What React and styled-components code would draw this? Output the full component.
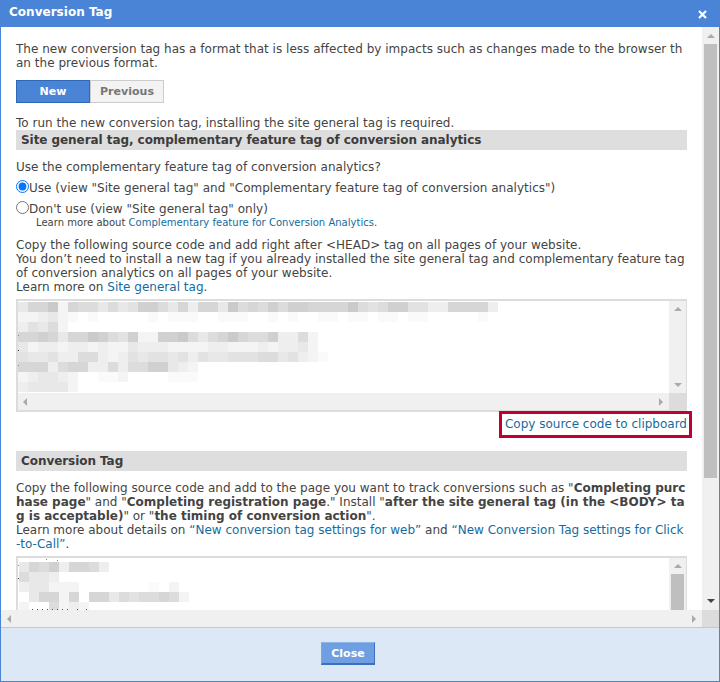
import React from "react";
import styled, { createGlobalStyle } from "styled-components";

const GlobalStyle = createGlobalStyle`
  html, body {
    margin: 0;
    padding: 0;
    background: #fff;
  }
  body {
    font-family: "DejaVu Sans", Verdana, sans-serif;
    font-size: 12px;
    letter-spacing: 0.02px;
    color: #444;
  }
`;

const Dialog = styled.div`
  width: 720px;
  height: 682px;
  box-sizing: border-box;
  display: flex;
  flex-direction: column;
  border: 1px solid #4a84d6;
  border-top: 0;
  overflow: hidden;
`;

const TitleBar = styled.div`
  height: 27px;
  flex: none;
  box-sizing: border-box;
  margin: 0 -1px;
  padding: 0 13px 3px 9px;
  background: #4a84d6;
  display: flex;
  align-items: center;
  justify-content: space-between;
  color: #fff;
  font-size: 12px;
  font-weight: bold;
`;

const CloseX = styled.svg`
  width: 9px;
  height: 9px;
  margin-top: 4px;
`;

const Middle = styled.div`
  height: 583px;
  flex: none;
  display: flex;
`;

const Viewport = styled.div`
  flex: 1;
  min-width: 0;
  overflow: hidden;
  padding: 15px 15px 0 15px;
`;

const VRail = styled.div`
  flex: none;
  width: ${(p) => p.$width}px;
  background: #f0f0f0;
  display: flex;
  flex-direction: column;
  align-items: center;
  padding: ${(p) => p.$pad}px 0;
  box-sizing: border-box;
`;

const VThumb = styled.div`
  width: 13px;
  height: ${(p) => p.$height}px;
  flex: none;
  margin-top: 6px;
  background: #bfbfbf;
`;

const Arrow = styled.span`
  flex: none;
  display: block;
  width: 0;
  height: 0;
  ${(p) => p.$down && "margin-top: auto;"}
  ${(p) =>
    p.$dir === "up" &&
    `border-left: 4px solid transparent; border-right: 4px solid transparent; border-bottom: 4px solid ${p.$color || "#aaa"};`}
  ${(p) =>
    p.$dir === "down" &&
    `border-left: 4px solid transparent; border-right: 4px solid transparent; border-top: 4px solid ${p.$color || "#aaa"};`}
  ${(p) =>
    p.$dir === "left" &&
    `border-top: 4px solid transparent; border-bottom: 4px solid transparent; border-right: 4px solid ${p.$color || "#aaa"};`}
  ${(p) =>
    p.$dir === "right" &&
    `border-top: 4px solid transparent; border-bottom: 4px solid transparent; border-left: 4px solid ${p.$color || "#aaa"};`}
`;

const HBar = styled.div`
  height: ${(p) => p.$height}px;
  flex: none;
  display: flex;
  background: #f0f0f0;
`;

const HTrack = styled.div`
  flex: 1;
  display: flex;
  align-items: center;
  justify-content: space-between;
  padding: 0 ${(p) => p.$right}px 0 ${(p) => p.$left}px;
`;

const Corner = styled.div`
  flex: none;
  width: ${(p) => p.$width}px;
  background: #dcdcdc;
`;

const Para = styled.p`
  margin: ${(p) => p.$top || 0}px 1px 0 0;
  line-height: 14px;
  word-break: break-all;
  ${(p) => p.$tight && "letter-spacing: 0;"}
`;

const Tabs = styled.div`
  display: flex;
  margin-top: 10px;
`;

const Tab = styled.div`
  width: 74px;
  height: 23px;
  box-sizing: border-box;
  display: flex;
  align-items: center;
  justify-content: center;
  font-size: 11px;
  font-weight: bold;
  ${(p) =>
    p.$active
      ? "background: #4a84d6; border: 1px solid #2f68b4; color: #fff;"
      : "background: #f3f3f3; border: 1px solid #ccc; color: #777;"}
`;

const Band = styled.div`
  height: 20px;
  margin-top: ${(p) => p.$top}px;
  padding-left: 5px;
  background: #dedede;
  display: flex;
  align-items: center;
  font-weight: bold;
  color: #3c3c3c;
  font-size: 12px;
  letter-spacing: -0.06px;
`;

const RadioRow = styled.label`
  display: flex;
  align-items: center;
  height: 14px;
  margin-top: 7px;
`;

const Radio = styled.input`
  margin: 0 0 4px;
  width: 13px;
  height: 13px;
  accent-color: #0075ff;
`;

const SmallNote = styled.div`
  margin: 1px 0 0 20px;
  height: 12px;
  line-height: 12px;
  font-size: 10px;
  color: #444;
`;

const Link = styled.a`
  color: #146c9e;
  text-decoration: none;
`;

const CodeBox = styled.div`
  margin-top: ${(p) => p.$top}px;
  height: ${(p) => p.$height}px;
  box-sizing: border-box;
  border: 2px solid #dcdcdc;
  border-right-width: 1px;
  display: flex;
  flex-direction: column;
  background: #fff;
`;

const CodeMain = styled.div`
  flex: 1;
  min-height: 0;
  display: flex;
`;

const CodeText = styled.div`
  flex: 1;
  min-width: 0;
  overflow: hidden;
`;

const Smudge = styled.svg`
  display: block;
`;

const CopyRow = styled.div`
  margin-top: 5px;
  height: 14px;
  line-height: 14px;
  display: flex;
  justify-content: flex-end;
`;

const CopyLink = styled(Link)`
  position: relative;
  letter-spacing: 0;
  &::after {
    content: "";
    position: absolute;
    top: -6px;
    bottom: -7px;
    left: -6px;
    right: -5px;
    border: 3px solid #c00033;
  }
`;

const Footer = styled.div`
  flex: 1;
  border-top: 1px solid #b4cce8;
  background: #dde8f7;
  display: flex;
  align-items: flex-start;
  justify-content: center;
  padding: 14px 24px 0 0;
`;

const CloseButton = styled.button`
  width: 54px;
  height: 23px;
  box-sizing: border-box;
  padding: 0;
  background: #6f9fe0;
  border: 1px solid #7aa6e2;
  border-top-color: #8eb5e8;
  border-right-color: #3a70bd;
  border-bottom-color: #3a70bd;
  border-bottom-width: 2px;
  color: #fff;
  font-family: inherit;
  font-size: 11px;
  font-weight: bold;
`;

const GRAYS = {
  1: "#fafafa",
  2: "#f4f4f4",
  3: "#eeeeee",
  4: "#e8e8e8",
  5: "#e2e2e2",
  6: "#dcdcdc",
  7: "#d6d6d6",
  8: "#d0d0d0",
  9: "#cacaca",
};

const tagRows = [
  "477927664645886473774967686887777965688553377773",
  "223421.1.....1.111..111..1.1..11.11.11.11.....1",
  "35462",
  "778747798658228896467976683362",
  "423323323224333222233222323342",
  "5445336632354554535445556645321",
  "777367733636688432",
  "234432..112....111",
  "344442",
];

const conversionRows = ["476837763", "6443", "344222.......1.2", ".47727.7746566762", "2..6232"];

function Pixels({ rows, width, height, ox, oy, specks = [] }) {
  return (
    <Smudge width={width} height={height}>
      {rows.map((row, r) =>
        row
          .split("")
          .map((c, i) =>
            GRAYS[c] ? (
              <rect key={`${r}-${i}`} x={ox + i * 10} y={oy + r * 10} width="10" height="10" fill={GRAYS[c]} />
            ) : null
          )
      )}
      {specks.map(([x, y, fill], i) => (
        <rect key={i} x={x} y={y} width="1" height="1" fill={fill} />
      ))}
    </Smudge>
  );
}

function CodeArea({ top, height, rows, thumb, hbar, ox, oy, specks }) {
  return (
    <CodeBox $top={top} $height={height}>
      <CodeMain>
        <CodeText>
          <Pixels rows={rows} width={640} height={100} ox={ox} oy={oy} specks={specks} />
        </CodeText>
        <VRail $width={17} $pad={6}>
          <Arrow $dir="up" />
          {thumb && <VThumb $height={thumb} />}
          {!thumb && <Arrow $dir="down" $down />}
        </VRail>
      </CodeMain>
      {hbar && (
        <HBar $height={17}>
          <HTrack $left={5} $right={6}>
            <Arrow $dir="left" />
            <Arrow $dir="right" />
          </HTrack>
          <Corner $width={17} />
        </HBar>
      )}
    </CodeBox>
  );
}

function App() {
  return (
    <>
      <GlobalStyle />
      <Dialog>
        <TitleBar>
          Conversion Tag
          <CloseX viewBox="0 0 9 9">
            <path d="M1 1 L8 8 M8 1 L1 8" stroke="#fff" strokeWidth="2.2" />
          </CloseX>
        </TitleBar>
        <Middle>
          <Viewport>
            <Para>
              The new conversion tag has a format that is less affected by impacts such as changes made to the
              browser than the previous format.
            </Para>
            <Tabs>
              <Tab $active>New</Tab>
              <Tab>Previous</Tab>
            </Tabs>
            <Para $top={13}>To run the new conversion tag, installing the site general tag is required.</Para>
            <Band $top={0}>Site general tag, complementary feature tag of conversion analytics</Band>
            <Para $top={10}>Use the complementary feature tag of conversion analytics?</Para>
            <RadioRow>
              <Radio type="radio" name="tag" defaultChecked />
              Use (view "Site general tag" and "Complementary feature tag of conversion analytics")
            </RadioRow>
            <RadioRow>
              <Radio type="radio" name="tag" />
              Don't use (view "Site general tag" only)
            </RadioRow>
            <SmallNote>
              Learn more about <Link href="#">Complementary feature for Conversion Analytics</Link>.
            </SmallNote>
            <Para $top={9}>Copy the following source code and add right after &lt;HEAD&gt; tag on all pages of your website.</Para>
            <Para>
              You don’t need to install a new tag if you already installed the site general tag and complementary feature tag of conversion analytics on all pages of your website.
            </Para>
            <Para>
              Learn more on <Link href="#">Site general tag</Link>.
            </Para>
            <CodeArea
              top={5}
              height={113}
              rows={tagRows}
              hbar
              ox={0}
              oy={1}
              specks={[
                [0, 34, "#888"],
                [0, 49, "#333"],
                [0, 64, "#888"],
              ]}
            />
            <CopyRow>
              <CopyLink href="#">Copy source code to clipboard</CopyLink>
            </CopyRow>
            <Band $top={20}>Conversion Tag</Band>
            <Para $top={10} $tight>
              Copy the following source code and add to the page you want to track conversions such as "<b>Completing purchase page</b>" and "<b>Completing registration page</b>." Install "<b>after the site general tag (in the &lt;BODY&gt; tag is acceptable)</b>" or "<b>the timing of conversion action</b>".
            </Para>
            <Para $tight>
              Learn more about details on <Link href="#">“New conversion tag settings for web”</Link> and{" "}
              <Link href="#">“New Conversion Tag settings for Click-to-Call”</Link>.
            </Para>
            <CodeArea
              top={5}
              height={120}
              rows={conversionRows}
              thumb={60}
              ox={1}
              oy={4}
              specks={[
                [28, 1, "#888"],
                [39, 2, "#888"],
                [0, 7, "#888"],
                [0, 20, "#555"],
                [14, 51, "#555"],
                [19, 51, "#555"],
                [24, 51, "#555"],
                [29, 51, "#555"],
                [34, 51, "#555"],
                [39, 51, "#555"],
                [44, 51, "#555"],
                [49, 51, "#555"],
                [59, 51, "#555"],
                [68, 51, "#555"],
              ]}
            />
          </Viewport>
          <VRail $width={17} $pad={7}>
            <Arrow $dir="up" />
            <VThumb $height={434} />
            <Arrow $dir="down" $down $color="#444" />
          </VRail>
        </Middle>
        <HBar $height={17}>
          <HTrack $left={6} $right={6}>
            <Arrow $dir="left" />
            <Arrow $dir="right" />
          </HTrack>
          <Corner $width={17} />
        </HBar>
        <Footer>
          <CloseButton>Close</CloseButton>
        </Footer>
      </Dialog>
    </>
  );
}

export default App;
